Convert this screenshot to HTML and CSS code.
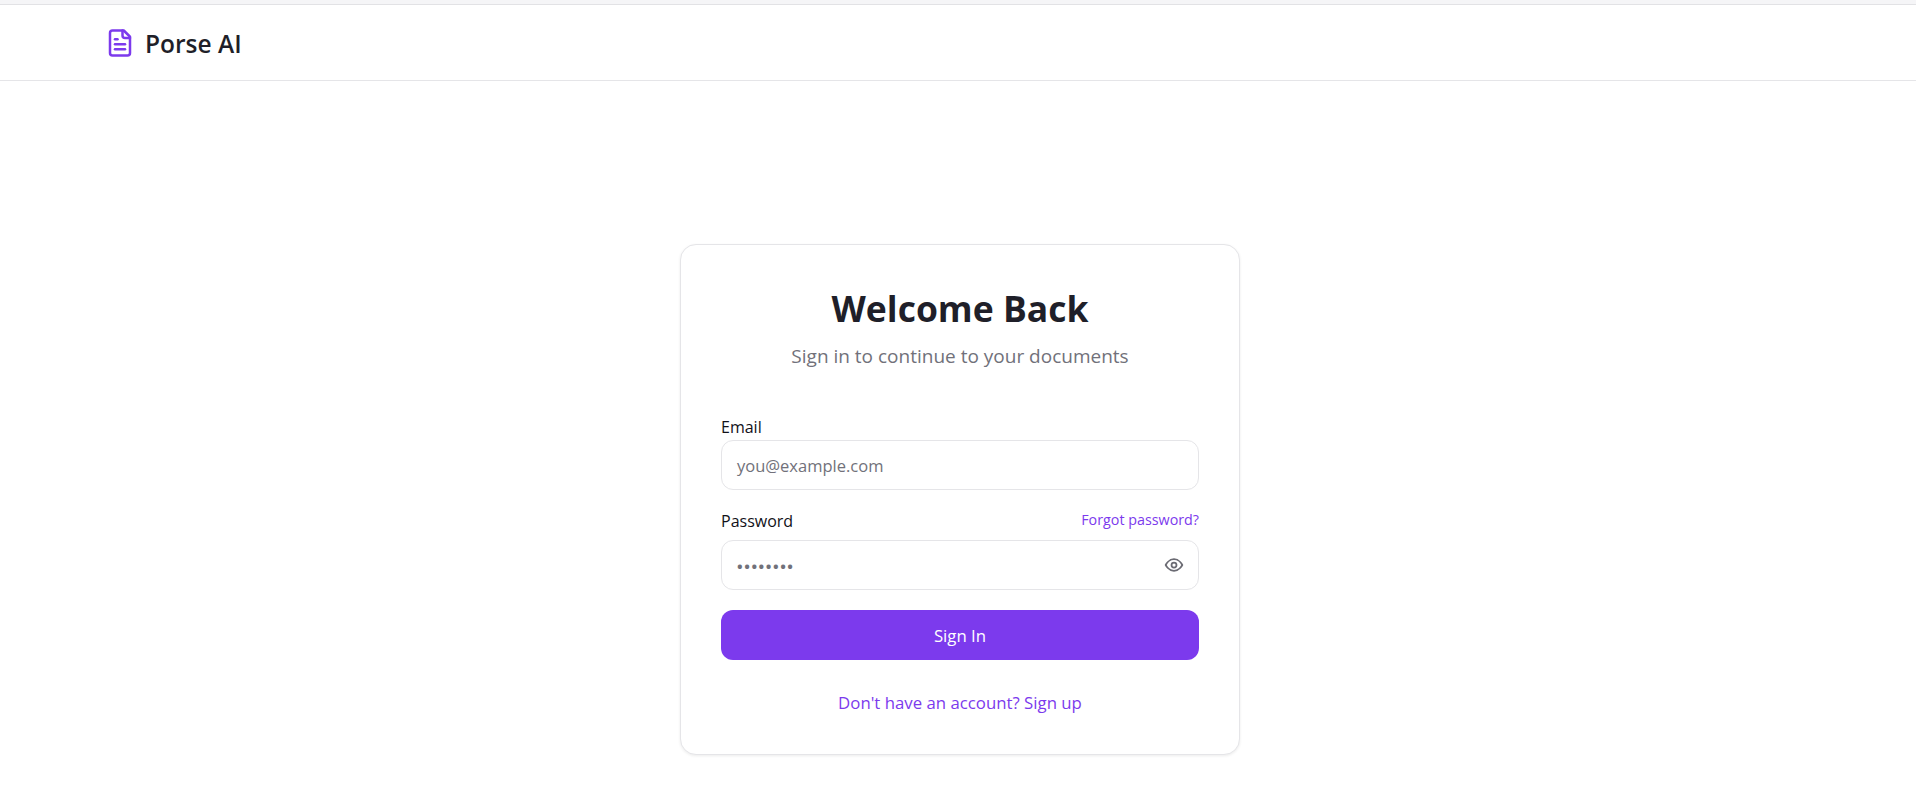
FILE: index.html
```html
<!DOCTYPE html>
<html lang="en">
<head>
<meta charset="utf-8">
<title>Porse AI</title>
<link rel="stylesheet" href="styles.css">
</head>
<body>
<div class="topstrip"></div>
<header class="header">
  <svg class="logo" viewBox="0 0 24 24" fill="none" stroke="#7c3aed" stroke-width="2" stroke-linecap="round" stroke-linejoin="round"><path d="M15 2H6a2 2 0 0 0-2 2v16a2 2 0 0 0 2 2h12a2 2 0 0 0 2-2V7Z"/><path d="M14 2v4a2 2 0 0 0 2 2h4"/><path d="M10 9H8"/><path d="M16 13H8"/><path d="M16 17H8"/></svg>
  <span class="brand">Porse AI</span>
</header>
<main class="main">
  <section class="card">
    <h1 class="title">Welcome Back</h1>
    <p class="subtitle">Sign in to continue to your documents</p>
    <form class="form">
      <div class="field">
        <label class="label">Email</label>
        <div class="input"><span class="placeholder">you@example.com</span></div>
      </div>
      <div class="field field-password">
        <div class="label-row"><label class="label">Password</label><a class="forgot">Forgot password?</a></div>
        <div class="input input-password"><span class="dots">••••••••</span>
          <svg class="eye" viewBox="0 0 24 24" fill="none" stroke="#6b6b73" stroke-width="2.1" stroke-linecap="round" stroke-linejoin="round"><path d="M2 12s3.6-7 10-7 10 7 10 7-3.6 7-10 7-10-7-10-7Z"/><circle cx="12" cy="12" r="3"/></svg>
        </div>
      </div>
      <div class="button">Sign In</div>
    </form>
    <a class="signup">Don't have an account? Sign up</a>
  </section>
</main>
</body>
</html>
```
FILE: styles.css
```css
* { box-sizing: border-box; }
html, body { margin: 0; padding: 0; background: #fff; overflow: hidden; height: 100%; }
body { font-family: "Open Sans", "Noto Sans", sans-serif; color: #1f1f29; }
.topstrip { height: 5px; background: #f5f5f7; border-bottom: 1px solid #e2e2e5; }
.header { height: 76px; display: flex; align-items: center; gap: 10px; padding-left: 105px; border-bottom: 1px solid #e5e5e8; }
.logo { width: 30px; height: 30px; flex: none; }
.brand { padding-top: 2px; font-size: 24.5px; font-weight: 600; color: #1f1f29; }
.main { display: flex; justify-content: center; padding: 163px 0 0 4px; }
.card { width: 560px; height: 511px; padding: 40px; border: 1px solid #e5e5e8; border-radius: 16px; box-shadow: 0 1px 3px rgba(0,0,0,.08); background: #fff; display: flex; flex-direction: column; align-items: stretch; }
.title { margin: 0; font-size: 35.5px; line-height: 46px; font-weight: 700; text-align: center; color: #1f1f29; }
.subtitle { margin: 11px 0 0; font-size: 19px; line-height: 28px; text-align: center; color: #71717a; }
.form { margin-top: 46px; display: flex; flex-direction: column; }
.field { display: flex; flex-direction: column; }
.field-password { margin-top: 16px; }
.label { font-size: 16px; line-height: 22px; color: #111118; }
.field > .label { margin-bottom: 2px; }
.label-row { display: flex; justify-content: space-between; align-items: center; height: 30px; margin-bottom: 4px; }
.forgot { margin-bottom: 3px; font-size: 14.3px; color: #7c3aed; }
.input { height: 50px; border: 1px solid #e5e5e8; border-radius: 12px; display: flex; align-items: center; justify-content: space-between; padding: 0 15px; font-size: 16.5px; }
.placeholder { color: #71717a; }
.dots { padding-top: 2px; color: #71717a; font-size: 15px; font-weight: 700; letter-spacing: 1.55px; line-height: 24px; }
.eye { width: 20px; height: 20px; margin-right: -1px; }
.button { margin-top: 20px; height: 50px; border-radius: 12px; background: #7c3aed; color: #fff; font-size: 16.8px; display: flex; align-items: center; justify-content: center; }
.signup { margin-top: 31px; font-size: 16.8px; line-height: 24px; text-align: center; color: #7c3aed; }
```
